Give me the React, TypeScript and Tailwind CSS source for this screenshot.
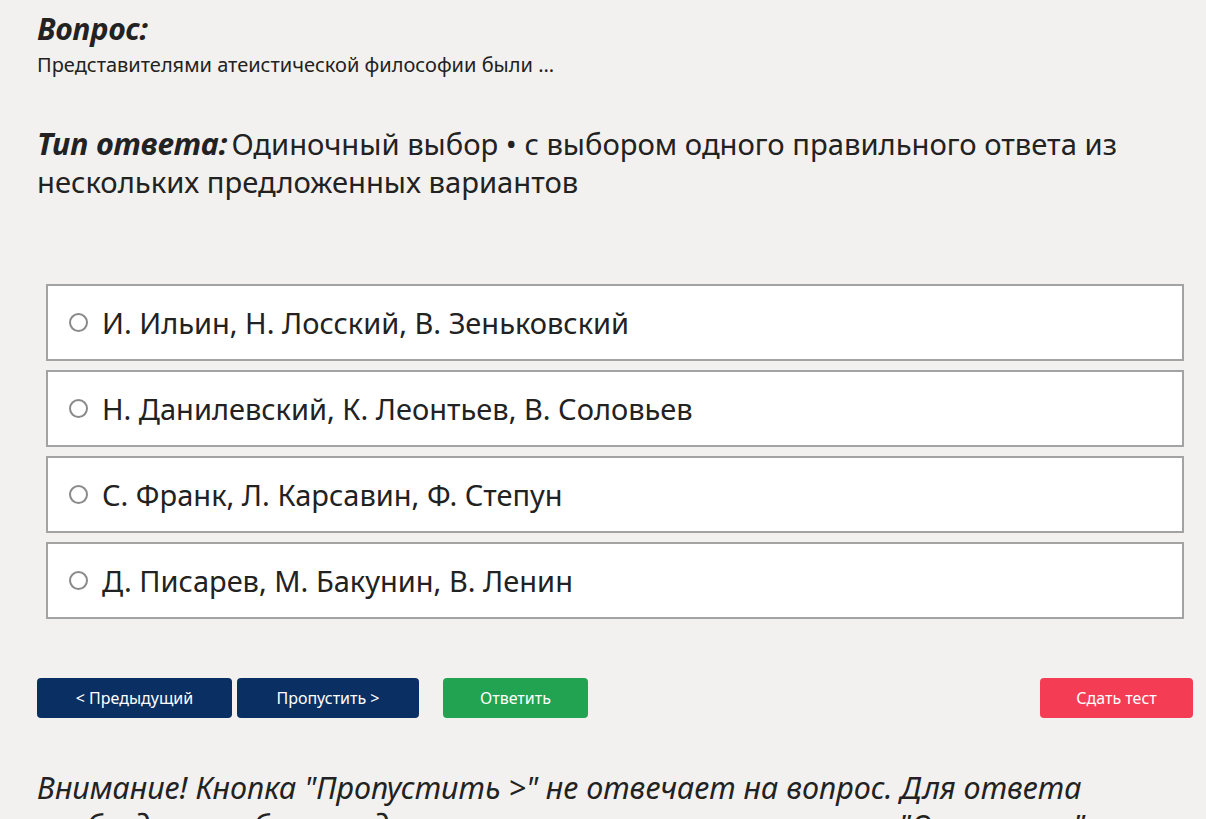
import React from "react";

const options = [
  "И. Ильин, Н. Лосский, В. Зеньковский",
  "Н. Данилевский, К. Леонтьев, В. Соловьев",
  "С. Франк, Л. Карсавин, Ф. Степун",
  "Д. Писарев, М. Бакунин, В. Ленин",
];

export default function App() {
  return (
    <div
      className="min-h-[819px] w-full overflow-hidden bg-[#f2f1ef] text-[#222]"
      style={{ fontFamily: '"Noto Sans", "Open Sans", sans-serif' }}
    >
      <div className="pl-[37px] pr-[13px] pt-[10px]">
        <h2 className="text-[30px] font-bold italic leading-[38px] text-[#222]">Вопрос:</h2>
        <p className="text-[20px] leading-[26px] mt-[4px]">Представителями атеистической философии были ...</p>

        <p className="mt-[46px] text-[29.2px] leading-[38px]">
          <span className="text-[30.5px] font-bold italic">Тип ответа:</span>
          <span className="ml-[4px]">Одиночный выбор • с выбором одного правильного ответа из нескольких предложенных вариантов</span>
        </p>

        <div className="mt-[83px] mx-[9px] flex flex-col gap-[9px]">
          {options.map((o) => (
            <label
              key={o}
              className="flex h-[77px] items-center border-2 border-[#a3a3a3] bg-white pl-[21px]"
            >
              <span className="h-[19px] w-[19px] shrink-0 rounded-full border-2 border-[#8a8a8a] bg-white" />
              <span className="ml-[14px] text-[29px] leading-[38px] text-[#222]">{o}</span>
            </label>
          ))}
        </div>

        <div className="mt-[59px] flex items-center">
          <button className="h-[40px] w-[195px] rounded-[4px] bg-[#0a2f63] text-[16px] text-white">&lt; Предыдущий</button>
          <button className="ml-[5px] h-[40px] w-[182px] rounded-[4px] bg-[#0a2f63] text-[16px] text-white">Пропустить &gt;</button>
          <button className="ml-[24px] h-[40px] w-[145px] rounded-[4px] bg-[#22a352] text-[16px] text-white">Ответить</button>
          <button className="ml-auto h-[40px] w-[153px] rounded-[4px] bg-[#f43d55] text-[16px] text-white">Сдать тест</button>
        </div>

        <p className="mt-[50px] text-[30.5px] italic leading-[38px] text-[#222]">
          Внимание! Кнопка "Пропустить &gt;" не отвечает на вопрос. Для ответа необходимо выбрать один из вариантов и нажать кнопку "Ответить".
        </p>
      </div>
    </div>
  );
}
